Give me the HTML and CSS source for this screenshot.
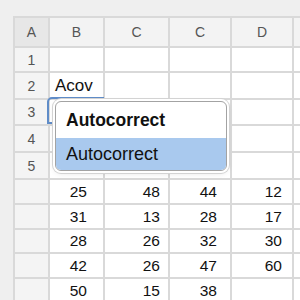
FILE: index.html
```html
<!DOCTYPE html>
<html>
<head>
<meta charset="utf-8">
<link rel="stylesheet" href="styles.css">
</head>
<body>
<div class="sheet">
  <div class="grid">
    <div class="corner">A</div><div class="ch">B</div><div class="ch">C</div><div class="ch">C</div><div class="ch">D</div><div class="ch"></div>
    <div class="rh">1</div><div class="c"></div><div class="c"></div><div class="c"></div><div class="c"></div><div class="c"></div>
    <div class="rh">2</div><div class="c txt">Acov</div><div class="c"></div><div class="c"></div><div class="c"></div><div class="c"></div>
    <div class="rh">3</div><div class="c"></div><div class="c"></div><div class="c"></div><div class="c"></div><div class="c"></div>
    <div class="rh">4</div><div class="c"></div><div class="c"></div><div class="c"></div><div class="c"></div><div class="c"></div>
    <div class="rh">5</div><div class="c"></div><div class="c"></div><div class="c"></div><div class="c"></div><div class="c"></div>
    <div class="rh"></div><div class="c n nb">25</div><div class="c n nc">48</div><div class="c n nc2">44</div><div class="c n nd">12</div><div class="c"></div>
    <div class="rh"></div><div class="c n nb">31</div><div class="c n nc">13</div><div class="c n nc2">28</div><div class="c n nd">17</div><div class="c"></div>
    <div class="rh"></div><div class="c n nb">28</div><div class="c n nc">26</div><div class="c n nc2">32</div><div class="c n nd">30</div><div class="c"></div>
    <div class="rh"></div><div class="c n nb">42</div><div class="c n nc">26</div><div class="c n nc2">47</div><div class="c n nd">60</div><div class="c"></div>
    <div class="rh"></div><div class="c n nb">50</div><div class="c n nc">15</div><div class="c n nc2">38</div><div class="c n nd"></div><div class="c"></div>
  </div>
  <div class="selection"></div>
  <div class="popup">
    <div class="opt bold">Autocorrect</div>
    <div class="opt hl">Autocorrect</div>
  </div>
</div>
</body>
</html>
```
FILE: styles.css
```css
html, body {
  margin: 0;
  padding: 0;
  background: #efefef;
  overflow: hidden;
  font-family: "Liberation Sans", Arial, sans-serif;
}
.sheet {
  position: relative;
  margin: 16px 0 0 13px;
  width: 287px;
  height: 284px;
}
.grid {
  display: grid;
  grid-template-columns: 33px 53px 63px 60px 60px 20px;
  grid-template-rows: 28px 23px 25px 24px 25px 25px 23px 23px 22px 23px 23px;
  gap: 2px;
  padding: 2px 0 0 2px;
  background: #d9d9d9;
}
.corner, .ch, .rh {
  display: flex;
  align-items: center;
  justify-content: center;
  color: #555;
  font-size: 14px;
}
.corner { background: #e7e7e7; }
.ch { background: #f3f3f3; }
.rh { background: #f4f4f4; }
.c {
  background: #fff;
  display: flex;
  align-items: center;
  color: #111;
}
.txt {
  font-size: 17px;
  padding-left: 5px;
}
.n {
  justify-content: flex-end;
  font-size: 15.5px;
}
.nb { padding-right: 16px; }
.nc { padding-right: 8px; }
.nc2 { padding-right: 13px; }
.nd { padding-right: 10px; }
.selection {
  position: absolute;
  left: 34px;
  top: 81px;
  width: 57px;
  height: 27px;
  box-sizing: border-box;
  border: 2px solid #5f8cc8;
  border-radius: 5px 0 0 0;
}
.popup {
  position: absolute;
  left: 42px;
  top: 85px;
  width: 172px;
  height: 70px;
  box-sizing: border-box;
  background: #fff;
  border: 1px solid #a3a3a3;
  border-radius: 6px;
  overflow: hidden;
  box-shadow: 0 0 0 2px #fff, 0 0 0 3px #d3d3d3, 0 2px 6px rgba(0,0,0,0.12);
}
.opt {
  display: flex;
  align-items: center;
  padding-left: 10px;
  color: #111;
}
.bold {
  height: 36px;
  font-size: 17.5px;
  font-weight: bold;
}
.hl {
  height: 32px;
  font-size: 18px;
  background: #a9c9ee;
}
```
